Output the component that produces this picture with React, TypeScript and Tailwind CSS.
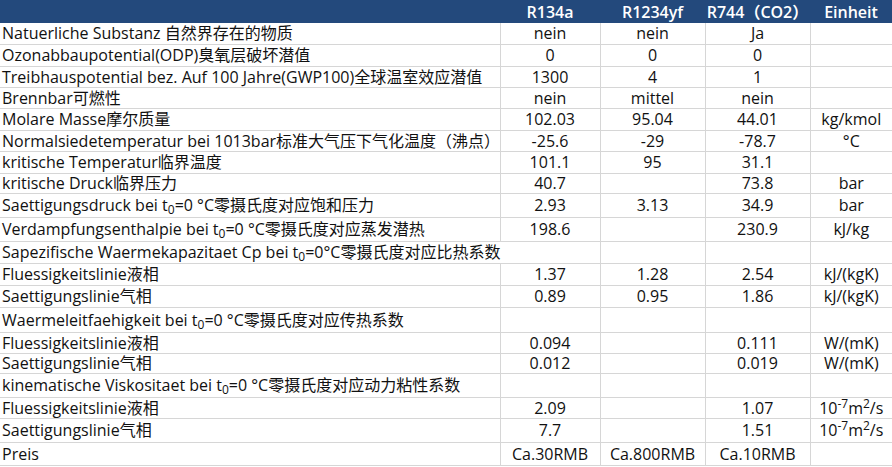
import type { ReactNode } from "react";

const T0 = () => (
  <>
    t<sub>0</sub>
  </>
);

const Visko = () => (
  <>
    10<sup>-7</sup>m<sup>2</sup>/s
  </>
);

type Row = {
  label: ReactNode;
  vals: ReactNode[];
  unit?: ReactNode;
  h: string;
  span?: boolean;
};

const rows: Row[] = [
  { label: "Natuerliche Substanz 自然界存在的物质", vals: ["nein", "nein", "Ja"], h: "h-[21px]" },
  { label: "Ozonabbaupotential(ODP)臭氧层破坏潜值", vals: ["0", "0", "0"], h: "h-[22px]" },
  {
    label: "Treibhauspotential bez. Auf 100 Jahre(GWP100)全球温室效应潜值",
    vals: ["1300", "4", "1"],
    h: "h-[21px]",
  },
  { label: "Brennbar可燃性", vals: ["nein", "mittel", "nein"], h: "h-[21px]" },
  { label: "Molare Masse摩尔质量", vals: ["102.03", "95.04", "44.01"], unit: "kg/kmol", h: "h-[22px]" },
  {
    label: "Normalsiedetemperatur bei 1013bar标准大气压下气化温度（沸点）",
    vals: ["-25.6", "-29", "-78.7"],
    unit: "°C",
    h: "h-[21px]",
  },
  { label: "kritische Temperatur临界温度", vals: ["101.1", "95", "31.1"], h: "h-[22px]" },
  { label: "kritische Druck临界压力", vals: ["40.7", "", "73.8"], unit: "bar", h: "h-[20px]" },
  {
    label: (
      <>
        Saettigungsdruck bei <T0 />=0 °C零摄氏度对应饱和压力
      </>
    ),
    vals: ["2.93", "3.13", "34.9"],
    unit: "bar",
    h: "h-[24px]",
  },
  {
    label: (
      <>
        Verdampfungsenthalpie bei <T0 />=0 °C零摄氏度对应蒸发潜热
      </>
    ),
    vals: ["198.6", "", "230.9"],
    unit: "kJ/kg",
    h: "h-[24px]",
  },
  {
    label: (
      <>
        Sapezifische Waermekapazitaet Cp bei <T0 />=0°C零摄氏度对应比热系数
      </>
    ),
    vals: ["", ""],
    h: "h-[22px]",
    span: true,
  },
  { label: "Fluessigkeitslinie液相", vals: ["1.37", "1.28", "2.54"], unit: "kJ/(kgK)", h: "h-[22px]" },
  { label: "Saettigungslinie气相", vals: ["0.89", "0.95", "1.86"], unit: "kJ/(kgK)", h: "h-[22px]" },
  {
    label: (
      <>
        Waermeleitfaehigkeit bei <T0 />=0 °C零摄氏度对应传热系数
      </>
    ),
    vals: ["", "", ""],
    h: "h-[25px]",
  },
  { label: "Fluessigkeitslinie液相", vals: ["0.094", "", "0.111"], unit: "W/(mK)", h: "h-[21px]" },
  { label: "Saettigungslinie气相", vals: ["0.012", "", "0.019"], unit: "W/(mK)", h: "h-[20px]" },
  {
    label: (
      <>
        kinematische Viskositaet bei <T0 />=0 °C零摄氏度对应动力粘性系数
      </>
    ),
    vals: ["", "", ""],
    h: "h-[24px]",
  },
  { label: "Fluessigkeitslinie液相", vals: ["2.09", "", "1.07"], unit: <Visko />, h: "h-[21px]" },
  { label: "Saettigungslinie气相", vals: ["7.7", "", "1.51"], unit: <Visko />, h: "h-[24px]" },
  { label: "Preis", vals: ["Ca.30RMB", "Ca.800RMB", "Ca.10RMB"], h: "h-[23px]" },
];

export default function App() {
  return (
    <div className="h-[467px] w-[892px] overflow-hidden bg-white font-['Open_Sans','Noto_Sans_CJK_SC',sans-serif] text-[16px] leading-none text-[#111]">
      <table className="w-[892px] table-fixed border-collapse">
        <colgroup>
          <col className="w-[500px]" />
          <col className="w-[100px]" />
          <col className="w-[105px]" />
          <col className="w-[105px]" />
          <col className="w-[82px]" />
        </colgroup>
        <thead>
          <tr className="h-[23px] bg-[#23497c] text-[16px] text-white">
            <th />
            <th className="text-center font-semibold">R134a</th>
            <th className="text-center font-semibold">R1234yf</th>
            <th className="whitespace-nowrap text-center font-semibold">R744（CO2）</th>
            <th className="text-center font-semibold">Einheit</th>
          </tr>
        </thead>
        <tbody>
          {rows.map((r, i) => (
            <tr key={i} className={r.h}>
              <td
                colSpan={r.span ? 2 : 1}
                className="whitespace-nowrap border-b border-[#d6d6d6] pl-[2px] text-left"
              >
                {r.label}
              </td>
              {r.vals.map((v, j) => (
                <td
                  key={j}
                  className="whitespace-nowrap border-b border-l border-[#d6d6d6] text-center"
                >
                  {v}
                </td>
              ))}
              <td className="whitespace-nowrap border-b border-l border-[#d6d6d6] text-center">
                {r.unit}
              </td>
            </tr>
          ))}
        </tbody>
      </table>
    </div>
  );
}
